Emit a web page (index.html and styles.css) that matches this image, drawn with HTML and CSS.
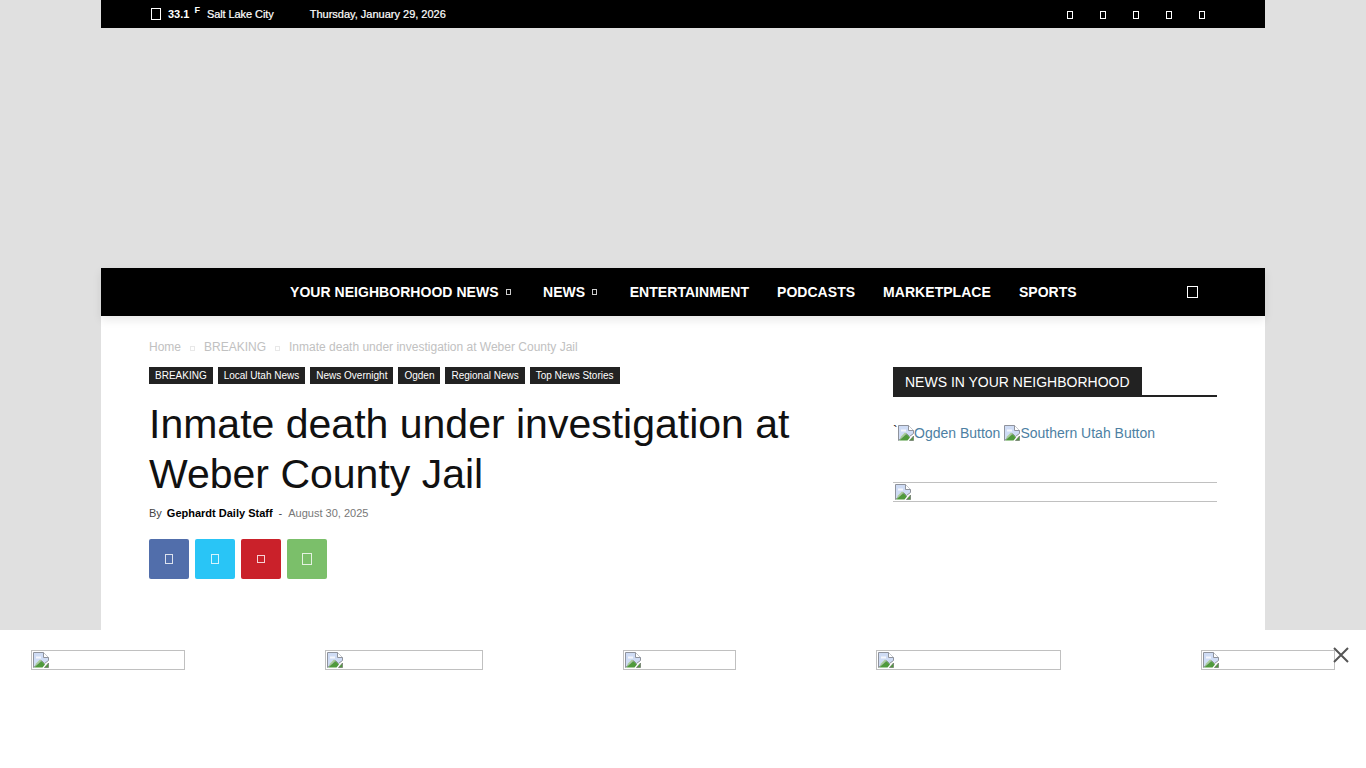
FILE: index.html
```html
<!DOCTYPE html>
<html lang="en">
<head>
<meta charset="utf-8">
<title>Inmate death under investigation at Weber County Jail</title>
<link rel="stylesheet" href="styles.css">
</head>
<body>
<svg class="defs" width="0" height="0" aria-hidden="true">
  <symbol id="broken" viewBox="0 0 16 16">
    <path d="M0.5 0.5H10.5L15.5 5.5V8.5L11.5 11.5L8.5 8.5L0.5 15.5Z" fill="#cfdcf5" stroke="#8f939c"/>
    <path d="M3 4.5H8V6.5H3Z" fill="#f4f7fd"/>
    <path d="M10.5 0.5V5.5H15.5" fill="#fff" stroke="#8f939c"/>
    <path d="M1 15.5L8.5 9L12 12.5L9.5 15.5Z" fill="#4f9a3c"/>
    <path d="M3 11.5L7 7.5L8.5 8.5L2 14Z" fill="#a9cf95"/>
    <path d="M11.5 15.5L15.5 11V15.5Z" fill="#4f9a3c" stroke="#6f746c" stroke-width="0.7"/>
  </symbol>
</svg>
<div class="page">
  <header class="topbar">
    <div class="top-left">
      <span class="tofu tofu-weather"></span>
      <span class="temp">33.1</span>
      <span class="unit">F</span>
      <span class="city">Salt Lake City</span>
      <span class="date">Thursday, January 29, 2026</span>
    </div>
    <div class="top-social">
      <span class="tofu tofu-small"></span>
      <span class="tofu tofu-small"></span>
      <span class="tofu tofu-small"></span>
      <span class="tofu tofu-small"></span>
      <span class="tofu tofu-small"></span>
    </div>
  </header>
  <div class="adspace"></div>
  <nav class="nav">
    <ul class="menu">
      <li class="menu-item">YOUR NEIGHBORHOOD NEWS<span class="tofu tofu-caret"></span></li>
      <li class="menu-item">NEWS<span class="tofu tofu-caret"></span></li>
      <li class="menu-item">ENTERTAINMENT</li>
      <li class="menu-item">PODCASTS</li>
      <li class="menu-item">MARKETPLACE</li>
      <li class="menu-item">SPORTS</li>
    </ul>
    <span class="tofu tofu-search"></span>
  </nav>
  <main class="content">
    <article class="article">
      <div class="crumbs">
        <span>Home</span><span class="tofu tofu-crumb"></span><span>BREAKING</span><span class="tofu tofu-crumb"></span><span>Inmate death under investigation at Weber County Jail</span>
      </div>
      <ul class="tags">
        <li class="tag">BREAKING</li>
        <li class="tag">Local Utah News</li>
        <li class="tag">News Overnight</li>
        <li class="tag">Ogden</li>
        <li class="tag">Regional News</li>
        <li class="tag">Top News Stories</li>
      </ul>
      <h1 class="title">Inmate death under investigation at Weber County Jail</h1>
      <div class="meta">
        <span class="by">By</span>
        <span class="author">Gephardt Daily Staff</span>
        <span class="dash">-</span>
        <span class="posted">August 30, 2025</span>
      </div>
      <div class="shares">
        <span class="share share-fb"><span class="tofu tofu-share"></span></span>
        <span class="share share-tw"><span class="tofu tofu-share"></span></span>
        <span class="share share-pin"><span class="tofu tofu-share tofu-share-narrow"></span></span>
        <span class="share share-wa"><span class="tofu tofu-share tofu-share-wide"></span></span>
      </div>
    </article>
    <aside class="sidebar">
      <div class="block-head"><span class="block-title">NEWS IN YOUR NEIGHBORHOOD</span></div>
      <div class="buttons">
        <span class="tick">`</span><span class="alt-img"><svg class="broken"><use href="#broken"/></svg>Ogden Button</span>
        <span class="alt-img"><svg class="broken"><use href="#broken"/></svg>Southern Utah Button</span>
      </div>
      <div class="side-img"><svg class="broken"><use href="#broken"/></svg></div>
    </aside>
  </main>
</div>
<div class="bottom-ad">
  <div class="ad-img ad-a"><svg class="broken"><use href="#broken"/></svg></div>
  <div class="ad-img ad-b"><svg class="broken"><use href="#broken"/></svg></div>
  <div class="ad-img ad-c"><svg class="broken"><use href="#broken"/></svg></div>
  <div class="ad-img ad-d"><svg class="broken"><use href="#broken"/></svg></div>
  <div class="ad-img ad-e"><svg class="broken"><use href="#broken"/></svg></div>
  <svg class="close" viewBox="0 0 16 16" aria-label="Close"><path d="M1 1L15 15M15 1L1 15" fill="none" stroke="#555" stroke-width="2"/></svg>
</div>
</body>
</html>
```
FILE: styles.css
```css
* { box-sizing: border-box; }
html, body { margin: 0; padding: 0; height: 768px; overflow: hidden; }
body { background: #e0e0e0; font-family: "Liberation Sans", Arial, sans-serif; color: #111; }
ul { list-style: none; margin: 0; padding: 0; }
.defs { position: absolute; }
.page { width: 1164px; margin: 0 auto; height: 768px; background: #fff; }

.tofu { display: inline-block; border: 1px solid #fff; flex: none; }

.topbar { height: 28px; background: #000; color: #fff; display: flex; align-items: center; justify-content: space-between; padding: 0 60px 0 50px; }
.top-left { display: flex; align-items: center; font-size: 11px; font-weight: 400; }
.tofu-weather { width: 10px; height: 12px; margin-right: 7px; }
.temp { font-weight: 700; }
.unit { font-size: 9px; font-weight: 700; margin: -9px 0 0 5px; }
.city { margin-left: 7px; -webkit-text-stroke: 0.2px #fff; letter-spacing: -0.08px; }
.date { margin-left: 36px; -webkit-text-stroke: 0.2px #fff; }
.top-social { display: flex; gap: 27px; margin-top: 1px; }
.tofu-small { width: 6px; height: 8px; }

.adspace { height: 240px; background: #e0e0e0; }

.nav { height: 48px; background: #000; display: flex; align-items: center; padding-left: 189px; position: relative; box-shadow: 0 4px 9px rgba(0,0,0,.09); }
.menu { display: flex; }
.menu-item { color: #fff; font-size: 14px; font-weight: 700; letter-spacing: 0.04px; margin-right: 28px; display: flex; align-items: center; }
.tofu-caret { width: 5px; height: 6px; margin-left: 7px; margin-right: 4.5px; border-color: #ccc; }
.tofu-search { width: 11px; height: 12px; margin-left: 82px; }

.content { display: flex; justify-content: space-between; padding: 24px 48px 0; }
.article { width: 680px; }
.crumbs { font-size: 12px; line-height: 14px; color: #c1c1c1; display: flex; align-items: center; }
.tofu-crumb { width: 5px; height: 5px; border-color: #e8e8e8; margin: 2px 9px 0 9px; }
.tags { display: flex; gap: 5px; margin-top: 13px; }
.tag { background: #222; color: #fff; font-size: 10px; line-height: 17px; padding: 0 6px; }
.title { font-size: 41px; font-weight: 400; line-height: 50px; margin: 15px 0 0; color: #111; }
.meta { display: flex; align-items: center; font-size: 11px; line-height: 14px; margin-top: 7px; }
.by { color: #444; }
.author { font-weight: 700; color: #000; margin-left: 5px; }
.dash { color: #444; margin-left: 6px; }
.posted { color: #777; margin-left: 6px; }
.shares { display: flex; gap: 6px; margin-top: 19px; }
.share { width: 40px; height: 40px; border-radius: 2px; display: flex; align-items: center; justify-content: center; }
.share-fb { background: #516eab; }
.share-tw { background: #29c5f6; }
.share-pin { background: #ca212a; }
.share-wa { background: #7bbf6a; }
.tofu-share { width: 8px; height: 10px; border-color: rgba(255,255,255,.8); }
.tofu-share-narrow { width: 8px; height: 8px; }
.tofu-share-wide { width: 10px; height: 12px; }

.sidebar { width: 324px; padding-top: 27px; }
.block-head { border-bottom: 2px solid #222; height: 30px; }
.block-title { display: inline-block; background: #222; color: #fff; font-size: 14px; line-height: 30px; height: 28px; padding: 0 12px; }
.buttons { display: flex; align-items: center; margin-top: 27px; font-size: 14px; line-height: 18px; color: #4d7fa3; }
.tick { color: #111; width: 5px; align-self: flex-start; line-height: 14px; }
.alt-img { display: inline-flex; align-items: center; margin-right: 4px; }
.broken { width: 16px; height: 16px; flex: none; display: block; }
.side-img { height: 20px; margin-top: 40px; padding: 1px 2px; border-top: 1px solid #c0c0c0; border-bottom: 1px solid #c0c0c0; }

.bottom-ad { position: fixed; left: 0; right: 0; bottom: 0; height: 138px; background: #fff; display: flex; justify-content: space-between; align-items: flex-start; padding: 20px 31px 0; }
.ad-img { height: 20px; padding: 1px; border: 1px solid #c0c0c0; }
.ad-a { width: 154px; }
.ad-b { width: 158px; }
.ad-c { width: 113px; }
.ad-d { width: 185px; }
.ad-e { width: 134px; }
.close { position: absolute; left: 1333px; top: 17px; width: 16px; height: 16px; }
```
